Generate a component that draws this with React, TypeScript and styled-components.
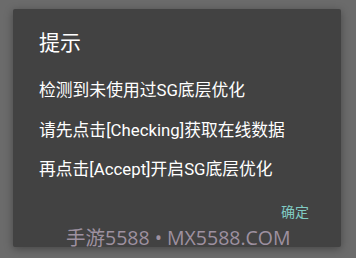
import styled, { createGlobalStyle } from 'styled-components';

const Global = createGlobalStyle`
  html, body {
    margin: 0;
    padding: 0;
    background: #6b6b6b;
  }
  body {
    font-family: Roboto, "Noto Sans CJK SC", sans-serif;
  }
`;

const Screen = styled.div`
  width: 356px;
  height: 258px;
  box-sizing: border-box;
  padding: 9px 15px 11px 13px;
  background: #6b6b6b;
`;

const Dialog = styled.div`
  height: 100%;
  box-sizing: border-box;
  background: #424242;
  border-radius: 2px;
  box-shadow: 0 2px 8px rgba(0, 0, 0, 0.35);
  padding: 20px 26px 0 26px;
  display: flex;
  flex-direction: column;
  position: relative;
`;

const Title = styled.h1`
  margin: 0;
  font-size: 21px;
  font-weight: 400;
  line-height: 28px;
  color: #ffffff;
`;

const Body = styled.div`
  margin-top: 14px;
  display: flex;
  flex-direction: column;
`;

const Line = styled.p`
  margin: 0;
  font-size: 16.8px;
  line-height: 39.5px;
  color: #ffffff;
  white-space: nowrap;
`;

const Actions = styled.div`
  display: flex;
  justify-content: flex-end;
  margin-top: 12px;
  margin-right: 6px;
`;

const Button = styled.button`
  background: none;
  border: none;
  padding: 0;
  font-family: inherit;
  font-size: 14px;
  line-height: 20px;
  color: #80cbc4;
`;

const Watermark = styled.div`
  position: absolute;
  left: 53px;
  top: 216px;
  font-family: "Open Sans", "Noto Sans CJK SC", sans-serif;
  font-size: 19.5px;
  line-height: 26px;
  color: #9e91a0;
  white-space: nowrap;
`;

export default function App() {
  return (
    <Screen>
      <Global />
      <Dialog>
        <Title>提示</Title>
        <Body>
          <Line>检测到未使用过SG底层优化</Line>
          <Line>请先点击[Checking]获取在线数据</Line>
          <Line>再点击[Accept]开启SG底层优化</Line>
        </Body>
        <Actions>
          <Button>确定</Button>
        </Actions>
        <Watermark>手游5588 • MX5588.COM</Watermark>
      </Dialog>
    </Screen>
  );
}
